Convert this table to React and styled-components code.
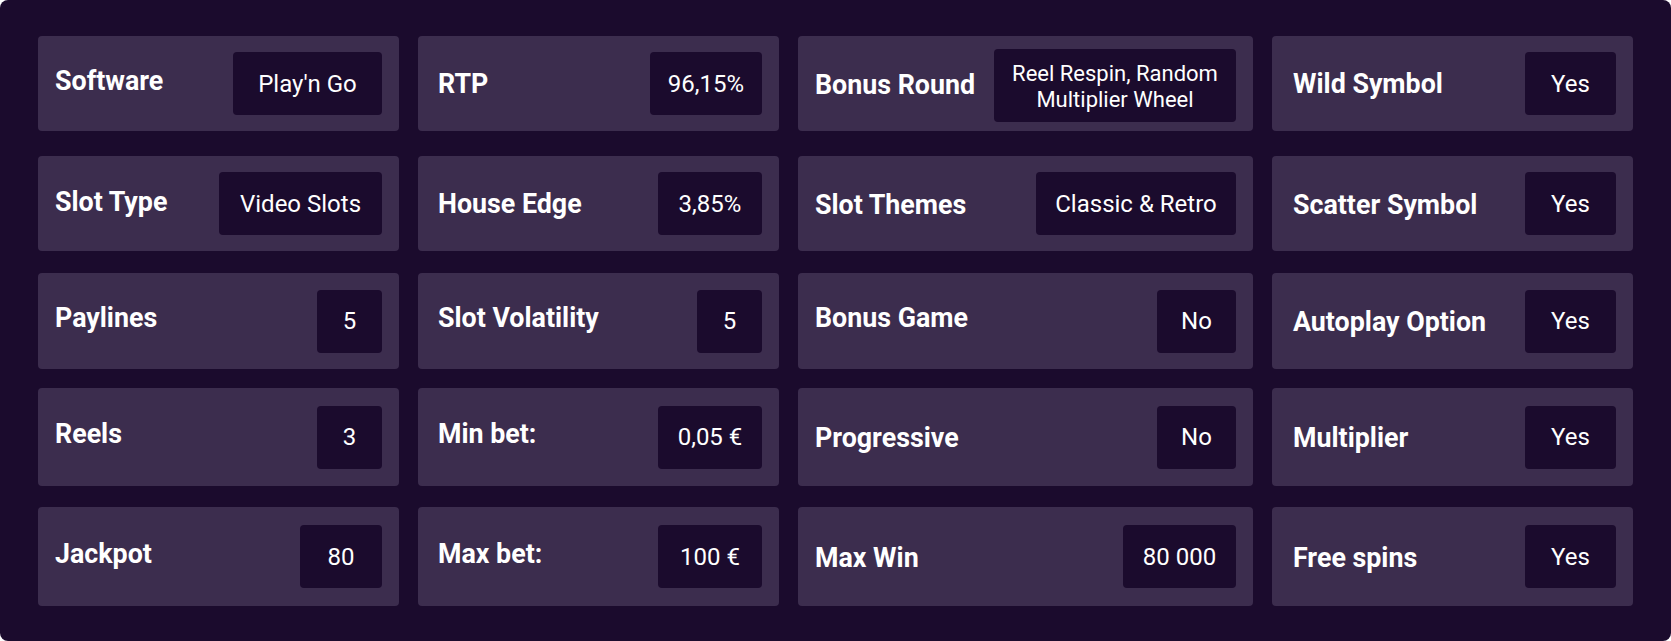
import React from 'react';
import styled, { createGlobalStyle } from 'styled-components';

const GlobalStyle = createGlobalStyle`
  html, body {
    margin: 0;
    padding: 0;
    background: #ffffff;
  }
  body {
    font-family: Roboto, "Liberation Sans", Arial, sans-serif;
  }
`;

const Panel = styled.section`
  box-sizing: border-box;
  width: 1671px;
  height: 641px;
  padding: 36px 38px 35px;
  background: #1b0b2d;
  border-radius: 8px;
  display: flex;
  flex-direction: column;
`;

const Row = styled.div`
  display: grid;
  grid-template-columns: 361px 361px 455px 361px;
  column-gap: 19px;
  height: ${p => p.$h}px;
  margin-top: ${p => p.$gap}px;
`;

const Card = styled.div`
  box-sizing: border-box;
  display: flex;
  align-items: center;
  justify-content: space-between;
  padding: 0 17px 0 ${p => p.$pl}px;
  background: #3c2d4e;
  border-radius: 4px;
`;

const Label = styled.span`
  color: #ffffff;
  font-size: 26.8px;
  font-weight: 700;
  line-height: 30px;
  white-space: nowrap;
  padding: ${p => (p.$nudge > 0 ? `${p.$nudge * 2}px 0 0` : `0 0 ${-p.$nudge * 2}px`)};
`;

const Value = styled.div`
  box-sizing: border-box;
  width: ${p => p.$w}px;
  min-height: 63px;
  padding: ${p => (p.$small ? '12px 0 9px' : '10px 0')};
  margin-top: ${p => (p.$small ? 3 : 0)}px;
  display: flex;
  align-items: center;
  justify-content: center;
  text-align: center;
  background: #1b0b2d;
  border-radius: 4px;
  color: #ffffff;
  font-size: ${p => (p.$small ? 22 : 24)}px;
  font-weight: 400;
  line-height: 26px;
`;

const rows = [
  {
    h: 95,
    gap: 0,
    items: [
      { label: 'Software', value: "Play'n Go", w: 149, nudge: -3 },
      { label: 'RTP', value: '96,15%', w: 112, nudge: 0 },
      { label: 'Bonus Round', value: 'Reel Respin, Random Multiplier Wheel', w: 242, nudge: 1, small: true },
      { label: 'Wild Symbol', value: 'Yes', w: 91, nudge: 0 },
    ],
  },
  {
    h: 95,
    gap: 25,
    items: [
      { label: 'Slot Type', value: 'Video Slots', w: 163, nudge: -2 },
      { label: 'House Edge', value: '3,85%', w: 104, nudge: 0 },
      { label: 'Slot Themes', value: 'Classic & Retro', w: 200, nudge: 1 },
      { label: 'Scatter Symbol', value: 'Yes', w: 91, nudge: 1 },
    ],
  },
  {
    h: 96,
    gap: 22,
    items: [
      { label: 'Paylines', value: '5', w: 65, nudge: -3 },
      { label: 'Slot Volatility', value: '5', w: 65, nudge: -3 },
      { label: 'Bonus Game', value: 'No', w: 79, nudge: -3 },
      { label: 'Autoplay Option', value: 'Yes', w: 91, nudge: 1 },
    ],
  },
  {
    h: 98,
    gap: 19,
    items: [
      { label: 'Reels', value: '3', w: 65, nudge: -3 },
      { label: 'Min bet:', value: '0,05 €', w: 104, nudge: -3 },
      { label: 'Progressive', value: 'No', w: 79, nudge: 1 },
      { label: 'Multiplier', value: 'Yes', w: 91, nudge: 1 },
    ],
  },
  {
    h: 99,
    gap: 21,
    items: [
      { label: 'Jackpot', value: '80', w: 82, nudge: -3 },
      { label: 'Max bet:', value: '100 €', w: 104, nudge: -3 },
      { label: 'Max Win', value: '80 000', w: 113, nudge: 1 },
      { label: 'Free spins', value: 'Yes', w: 91, nudge: 1 },
    ],
  },
];

// left padding differs a bit per column in the design
const colPad = [17, 20, 17, 21];

function App() {
  return (
    <>
      <GlobalStyle />
      <Panel>
        {rows.map((row, r) => (
          <Row key={r} $h={row.h} $gap={row.gap}>
            {row.items.map((item, c) => (
              <Card key={item.label} $pl={colPad[c]}>
                <Label $nudge={item.nudge}>{item.label}</Label>
                <Value $w={item.w} $small={item.small}>{item.value}</Value>
              </Card>
            ))}
          </Row>
        ))}
      </Panel>
    </>
  );
}

export default App;
